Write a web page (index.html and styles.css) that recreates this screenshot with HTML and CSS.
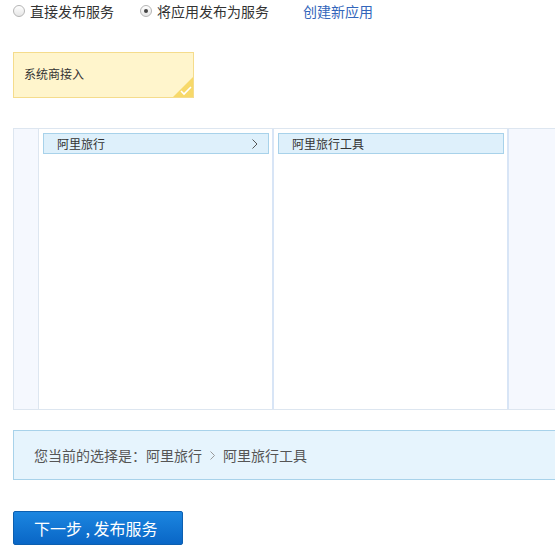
FILE: index.html
```html
<!DOCTYPE html>
<html lang="zh-CN">
<head>
    <meta charset="UTF-8">
    <title>发布服务</title>
    <link rel="stylesheet" href="styles.css">
</head>
<body>
    <div class="page">
        <!-- 发布方式 -->
        <div class="mode-row">
            <label class="mode"><span class="radio"></span>直接发布服务</label>
            <label class="mode"><span class="radio checked"></span>将应用发布为服务</label>
            <a class="create-link" href="#">创建新应用</a>
        </div>

        <!-- 接入类型 -->
        <div class="type-card">
            系统商接入
            <span class="corner">
                <svg width="20" height="20" viewBox="0 0 20 20">
                    <path d="M20 0 L20 20 L0 20 Z" fill="#f7d96a"/>
                    <path d="M8 14 L11 17 L18 10" fill="none" stroke="#fff" stroke-width="1.6"/>
                </svg>
            </span>
        </div>

        <!-- 类目选择 -->
        <div class="category-panel">
            <div class="side"></div>
            <div class="column">
                <div class="cat-item">阿里旅行
                    <svg class="chevron" width="6" height="10" viewBox="0 0 6 10">
                        <path d="M0.5 0.5 L5 5 L0.5 9.5" fill="none" stroke="#555" stroke-width="1"/>
                    </svg>
                </div>
            </div>
            <div class="column">
                <div class="cat-item">阿里旅行工具</div>
            </div>
            <div class="side rest"></div>
        </div>

        <div class="current">
            您当前的选择是：阿里旅行
            <svg class="sep" width="5" height="9" viewBox="0 0 5 9">
                <path d="M0.5 0.5 L4.5 4.5 L0.5 8.5" fill="none" stroke="#999" stroke-width="1"/>
            </svg>
            阿里旅行工具
        </div>

        <button class="next-btn">下一步 , 发布服务</button>
    </div>
</body>
</html>
```

FILE: styles.css
```css
* {
    box-sizing: border-box;
}

body {
    margin: 0;
    font-family: "Microsoft YaHei", "Noto Sans CJK SC", sans-serif;
    color: #333;
    background: #fff;
    overflow: hidden;
}

.page {
    padding: 0 0 0 13px;
}

/* Mode row */
.mode-row {
    display: flex;
    align-items: center;
    height: 22px;
    font-size: 14px;
    color: #333;
}

.mode {
    display: flex;
    align-items: center;
    margin-right: 26px;
}

.radio {
    width: 12px;
    height: 12px;
    border: 1px solid #b5b5b5;
    border-radius: 50%;
    background: linear-gradient(#fff, #e6e6e6);
    margin-right: 5px;
    position: relative;
}

.radio.checked::after {
    content: "";
    position: absolute;
    left: 3px;
    top: 3px;
    width: 4px;
    height: 4px;
    border-radius: 50%;
    background: #444;
}

.create-link {
    color: #3366bb;
    text-decoration: none;
    margin-left: 8px;
}

/* Type card */
.type-card {
    position: relative;
    width: 181px;
    height: 46px;
    margin-top: 30px;
    padding-left: 10px;
    line-height: 42px;
    font-size: 12px;
    background: #fff5cc;
    border: 1px solid #f5dc8c;
    color: #333;
}

.corner {
    position: absolute;
    right: 0;
    bottom: 0;
    width: 20px;
    height: 20px;
    line-height: 0;
}

/* Category panel */
.category-panel {
    display: flex;
    height: 282px;
    margin-top: 30px;
    border: 1px solid #dde6f0;
    border-right: none;
}

.side {
    width: 25px;
    background: #f5f8fe;
    border-right: 1px solid #dde6f0;
}

.side.rest {
    flex: 1;
    border-right: none;
}

.column {
    width: 235px;
    padding: 4px 3px 0 4px;
    background: #fff;
    border-right: 2px solid #d8e5f6;
}

.cat-item {
    display: flex;
    align-items: center;
    justify-content: space-between;
    height: 21px;
    padding: 0 10px 0 13px;
    font-size: 12px;
    background: #def0fb;
    border: 1px solid #a8d2ea;
}

/* Current selection */
.current {
    display: flex;
    align-items: center;
    margin-top: 20px;
    height: 50px;
    padding-left: 20px;
    font-size: 14px;
    color: #555;
    background: #e6f4fd;
    border: 1px solid #a8d2ea;
    border-right: none;
}

.sep {
    margin: 0 8px;
}

/* Button */
.next-btn {
    display: block;
    margin-top: 31px;
    width: 170px;
    height: 34px;
    border: 1px solid #0c5fb0;
    border-radius: 2px;
    background: linear-gradient(#1c86e0, #0966c6);
    color: #fff;
    font-size: 16px;
    font-family: inherit;
    text-align: left;
    padding-left: 20px;
    cursor: pointer;
}
```
